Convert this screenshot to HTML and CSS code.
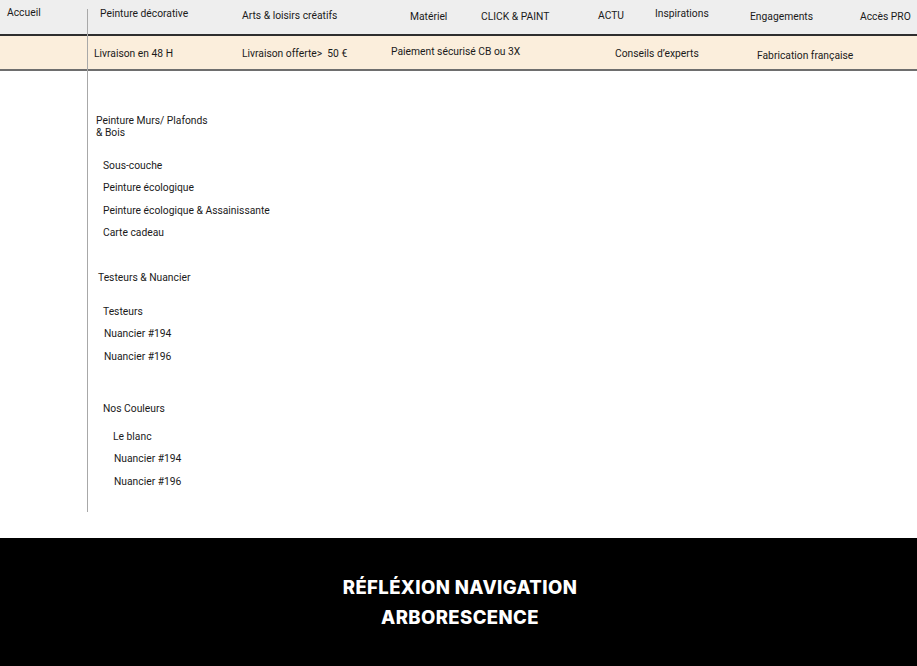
FILE: index.html
```html
<!DOCTYPE html>
<html lang="fr">
<head>
<meta charset="utf-8">
<title>Réfléxion navigation</title>
<link rel="stylesheet" href="styles.css">
</head>
<body>
<div class="page">
  <nav class="topbar">
    <span class="nav-item n1">Accueil</span>
    <span class="nav-item n2">Peinture décorative</span>
    <span class="nav-item n3">Arts &amp; loisirs créatifs</span>
    <span class="nav-item n4">Matériel</span>
    <span class="nav-item n5">CLICK &amp; PAINT</span>
    <span class="nav-item n6">ACTU</span>
    <span class="nav-item n7">Inspirations</span>
    <span class="nav-item n8">Engagements</span>
    <span class="nav-item n9">Accès PRO</span>
  </nav>
  <div class="infobar">
    <span class="info i1">Livraison en 48 H</span>
    <span class="info i2">Livraison offerte&gt;&nbsp; 50 €</span>
    <span class="info i3">Paiement sécurisé CB ou 3X</span>
    <span class="info i4">Conseils d’experts</span>
    <span class="info i5">Fabrication française</span>
  </div>
  <main class="tree">
    <section class="group g1">
      <div class="group-title">Peinture Murs/ Plafonds<br>&amp; Bois</div>
      <ul class="items">
        <li>Sous-couche</li>
        <li>Peinture écologique</li>
        <li>Peinture écologique &amp; Assainissante</li>
        <li>Carte cadeau</li>
      </ul>
    </section>
    <section class="group g2">
      <div class="group-title">Testeurs &amp; Nuancier</div>
      <ul class="items">
        <li>Testeurs</li>
        <li class="shift">Nuancier #194</li>
        <li class="shift">Nuancier #196</li>
      </ul>
    </section>
    <section class="group g3">
      <div class="group-title">Nos Couleurs</div>
      <ul class="items">
        <li>Le blanc</li>
        <li class="shift">Nuancier #194</li>
        <li class="shift">Nuancier #196</li>
      </ul>
    </section>
  </main>
  <footer class="footer">
    <h1 class="footer-title">RÉFLÉXION NAVIGATION<br>ARBORESCENCE</h1>
  </footer>
  <div class="divider"></div>
</div>
</body>
</html>
```

FILE: styles.css
```css
* { box-sizing: border-box; }
html, body { margin: 0; padding: 0; }
body {
  width: 917px;
  height: 666px;
  overflow: hidden;
  background: #fff;
  font-family: Roboto, "Liberation Sans", sans-serif;
  color: #1a1a1a;
  font-size: 10.3px;
}
.page {
  position: relative;
  display: flex;
  flex-direction: column;
  height: 666px;
}

/* top navigation */
.topbar {
  display: flex;
  align-items: flex-start;
  height: 36px;
  background: #eeeeee;
  border-bottom: 2px solid #2e2e2e;
  line-height: 13px;
}
.nav-item { white-space: nowrap; }
.n1 { margin-left: 7px; padding-top: 6px; width: 93px; }
.n2 { padding-top: 7px; width: 142px; }
.n3 { padding-top: 9px; width: 168px; }
.n4 { padding-top: 10px; width: 71px; }
.n5 { padding-top: 10px; width: 117px; }
.n6 { padding-top: 9px; width: 57px; }
.n7 { padding-top: 7px; width: 95px; }
.n8 { padding-top: 10px; width: 110px; }
.n9 { padding-top: 10px; }

/* info bar */
.infobar {
  display: flex;
  align-items: flex-start;
  height: 35px;
  background: #fbeedc;
  border-bottom: 2px solid #6e6e6e;
  line-height: 13px;
}
.info { white-space: nowrap; }
.i1 { margin-left: 94px; padding-top: 11px; width: 148px; }
.i2 { padding-top: 11px; width: 149px; }
.i3 { padding-top: 9px; width: 224px; }
.i4 { padding-top: 11px; width: 142px; }
.i5 { padding-top: 13px; }

/* tree */
.tree {
  flex: 1;
  display: flex;
  flex-direction: column;
  padding: 44px 0 0 96px;
  line-height: 12px;
}
.group-title { white-space: nowrap; }
.items {
  list-style: none;
  margin: 0;
  padding: 0;
}
.items li { height: 22.3px; white-space: nowrap; }

.g1 .items { margin-top: 21px; padding-left: 7px; }
.g2 { margin-top: 23px; }
.g2 .group-title { padding-left: 2px; }
.g2 .items { margin-top: 22px; padding-left: 7px; }
.g3 { margin-top: 30px; }
.g3 .group-title { padding-left: 7px; }
.g3 .items { margin-top: 16px; padding-left: 17px; }
.shift { padding-left: 1px; }

/* footer */
.footer {
  height: 128px;
  background: #000;
  display: flex;
  align-items: flex-start;
  justify-content: center;
  padding: 34px 0 0 3px;
}
.footer-title {
  margin: 0;
  color: #fff;
  font-family: Inter, "Liberation Sans", sans-serif;
  font-weight: 800;
  font-size: 18.5px;
  line-height: 30px;
  letter-spacing: 0.4px;
  text-align: center;
}

/* vertical guide line over the bars */
.divider {
  position: absolute;
  left: 87px;
  top: 9px;
  width: 1px;
  height: 503px;
  background: #a8a8a8;
}
```
